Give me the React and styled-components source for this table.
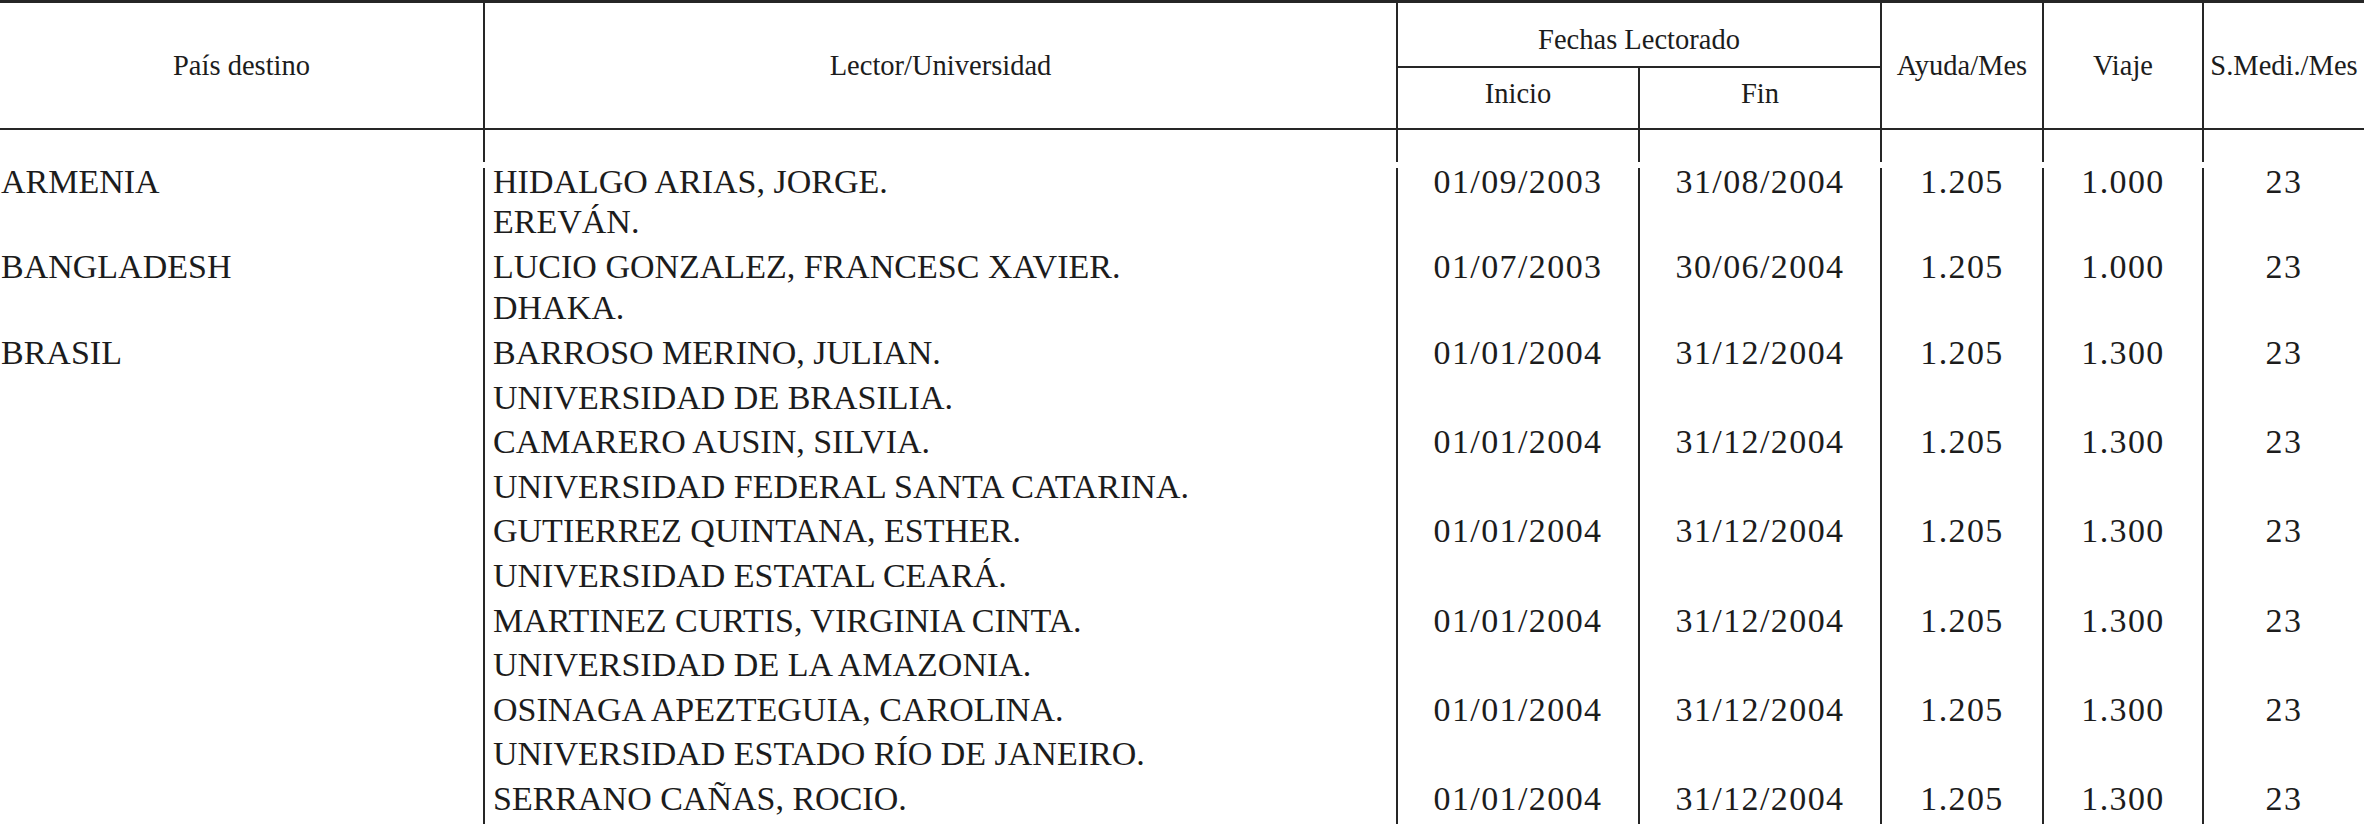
import React from "react";
import styled, { createGlobalStyle } from "styled-components";

const INK = "#262626";
const COLS = "483px 913px 242px 242px 162px 160px 162px";

const GlobalStyle = createGlobalStyle`
  *, *::before, *::after { box-sizing: border-box; }
  html, body { margin: 0; padding: 0; background: #fff; }
  body {
    font-family: "Liberation Serif", "Times New Roman", serif;
    color: #1c1c1c;
  }
`;

const Sheet = styled.div`
  width: 2364px;
  height: 824px;
  overflow: hidden;
  display: flex;
  flex-direction: column;
`;

const Head = styled.div`
  display: grid;
  grid-template-columns: ${COLS};
  height: 130px;
  border-top: 3px solid ${INK};
  border-bottom: 2px solid ${INK};
  flex: none;
`;

const HeadCell = styled.div`
  display: flex;
  align-items: center;
  justify-content: center;
  font-size: 28.5px;
  white-space: nowrap;
  border-left: ${(p) => (p.$first ? "none" : `2px solid ${INK}`)};
  padding-top: ${(p) => p.$top || 0}px;
  padding-bottom: ${(p) => p.$bottom || 0}px;
`;

const Group = styled.div`
  grid-column: span 2;
  display: grid;
  grid-template-columns: 240px 242px;
  grid-template-rows: 65px 1fr;
  border-left: 2px solid ${INK};
`;

const GroupTitle = styled(HeadCell)`
  grid-column: 1 / -1;
  border-bottom: 2px solid ${INK};
`;

const Row = styled.div`
  display: grid;
  grid-template-columns: ${COLS};
  flex: ${(p) => (p.$fill ? "1" : "none")};
  height: ${(p) => (p.$h ? `${p.$h}px` : "auto")};
  margin-bottom: ${(p) => p.$after || 0}px;
`;

const Cell = styled.div`
  border-left: ${(p) => (p.$first ? "none" : `2px solid ${INK}`)};
  text-align: ${(p) => p.$align || "center"};
  padding-left: ${(p) => p.$pad || 0}px;
  padding-bottom: ${(p) => p.$after || 0}px;
  display: flex;
  flex-direction: column;
  gap: ${(p) => p.$gap || 0}px;
`;

const Line = styled.div`
  height: 28px;
  line-height: 28px;
  font-size: 34px;
  white-space: nowrap;
`;

const Num = styled(Line)`
  letter-spacing: 1.4px;
`;

const records = [
  { pais: "ARMENIA", name: "HIDALGO ARIAS, JORGE.", uni: "EREVÁN.", ini: "01/09/2003", fin: "31/08/2004", ayuda: "1.205", viaje: "1.000", sm: "23", gap: 12, after: 17 },
  { pais: "BANGLADESH", name: "LUCIO GONZALEZ, FRANCESC XAVIER.", uni: "DHAKA.", ini: "01/07/2003", fin: "30/06/2004", ayuda: "1.205", viaje: "1.000", sm: "23", gap: 13, after: 17 },
  { pais: "BRASIL", name: "BARROSO MERINO, JULIAN.", uni: "UNIVERSIDAD DE BRASILIA.", ini: "01/01/2004", fin: "31/12/2004", ayuda: "1.205", viaje: "1.300", sm: "23", gap: 16.6, after: 16.6 },
  { pais: "", name: "CAMARERO AUSIN, SILVIA.", uni: "UNIVERSIDAD FEDERAL SANTA CATARINA.", ini: "01/01/2004", fin: "31/12/2004", ayuda: "1.205", viaje: "1.300", sm: "23", gap: 16.6, after: 16.6 },
  { pais: "", name: "GUTIERREZ QUINTANA, ESTHER.", uni: "UNIVERSIDAD ESTATAL CEARÁ.", ini: "01/01/2004", fin: "31/12/2004", ayuda: "1.205", viaje: "1.300", sm: "23", gap: 16.6, after: 16.6 },
  { pais: "", name: "MARTINEZ CURTIS, VIRGINIA CINTA.", uni: "UNIVERSIDAD DE LA AMAZONIA.", ini: "01/01/2004", fin: "31/12/2004", ayuda: "1.205", viaje: "1.300", sm: "23", gap: 16.6, after: 16.6 },
  { pais: "", name: "OSINAGA APEZTEGUIA, CAROLINA.", uni: "UNIVERSIDAD ESTADO RÍO DE JANEIRO.", ini: "01/01/2004", fin: "31/12/2004", ayuda: "1.205", viaje: "1.300", sm: "23", gap: 16.6, after: 16.6 },
  { pais: "", name: "SERRANO CAÑAS, ROCIO.", uni: null, ini: "01/01/2004", fin: "31/12/2004", ayuda: "1.205", viaje: "1.300", sm: "23", gap: 0, after: 0 },
];

function Record({ r }) {
  return (
    <Row>
      <Cell $first $align="left" $pad={1}>
        <Line>{r.pais}</Line>
      </Cell>
      <Cell $align="left" $pad={8} $gap={r.gap} $after={r.after}>
        <Line>{r.name}</Line>
        {r.uni && <Line>{r.uni}</Line>}
      </Cell>
      <Cell><Num>{r.ini}</Num></Cell>
      <Cell><Num>{r.fin}</Num></Cell>
      <Cell><Num>{r.ayuda}</Num></Cell>
      <Cell><Num>{r.viaje}</Num></Cell>
      <Cell><Num>{r.sm}</Num></Cell>
    </Row>
  );
}

function EmptyRow(props) {
  return (
    <Row {...props}>
      <Cell $first />
      <Cell />
      <Cell />
      <Cell />
      <Cell />
      <Cell />
      <Cell />
    </Row>
  );
}

export default function App() {
  return (
    <>
      <GlobalStyle />
      <Sheet>
        <Head>
          <HeadCell $first>País destino</HeadCell>
          <HeadCell>Lector/Universidad</HeadCell>
          <Group>
            <GroupTitle $first $top={10}>Fechas Lectorado</GroupTitle>
            <HeadCell $first $bottom={9}>Inicio</HeadCell>
            <HeadCell $bottom={9}>Fin</HeadCell>
          </Group>
          <HeadCell>Ayuda/Mes</HeadCell>
          <HeadCell>Viaje</HeadCell>
          <HeadCell>S.Medi./Mes</HeadCell>
        </Head>
        <EmptyRow $h={32} $after={6} />
        {records.map((r, i) => (
          <Record key={i} r={r} />
        ))}
        <EmptyRow $fill />
      </Sheet>
    </>
  );
}
